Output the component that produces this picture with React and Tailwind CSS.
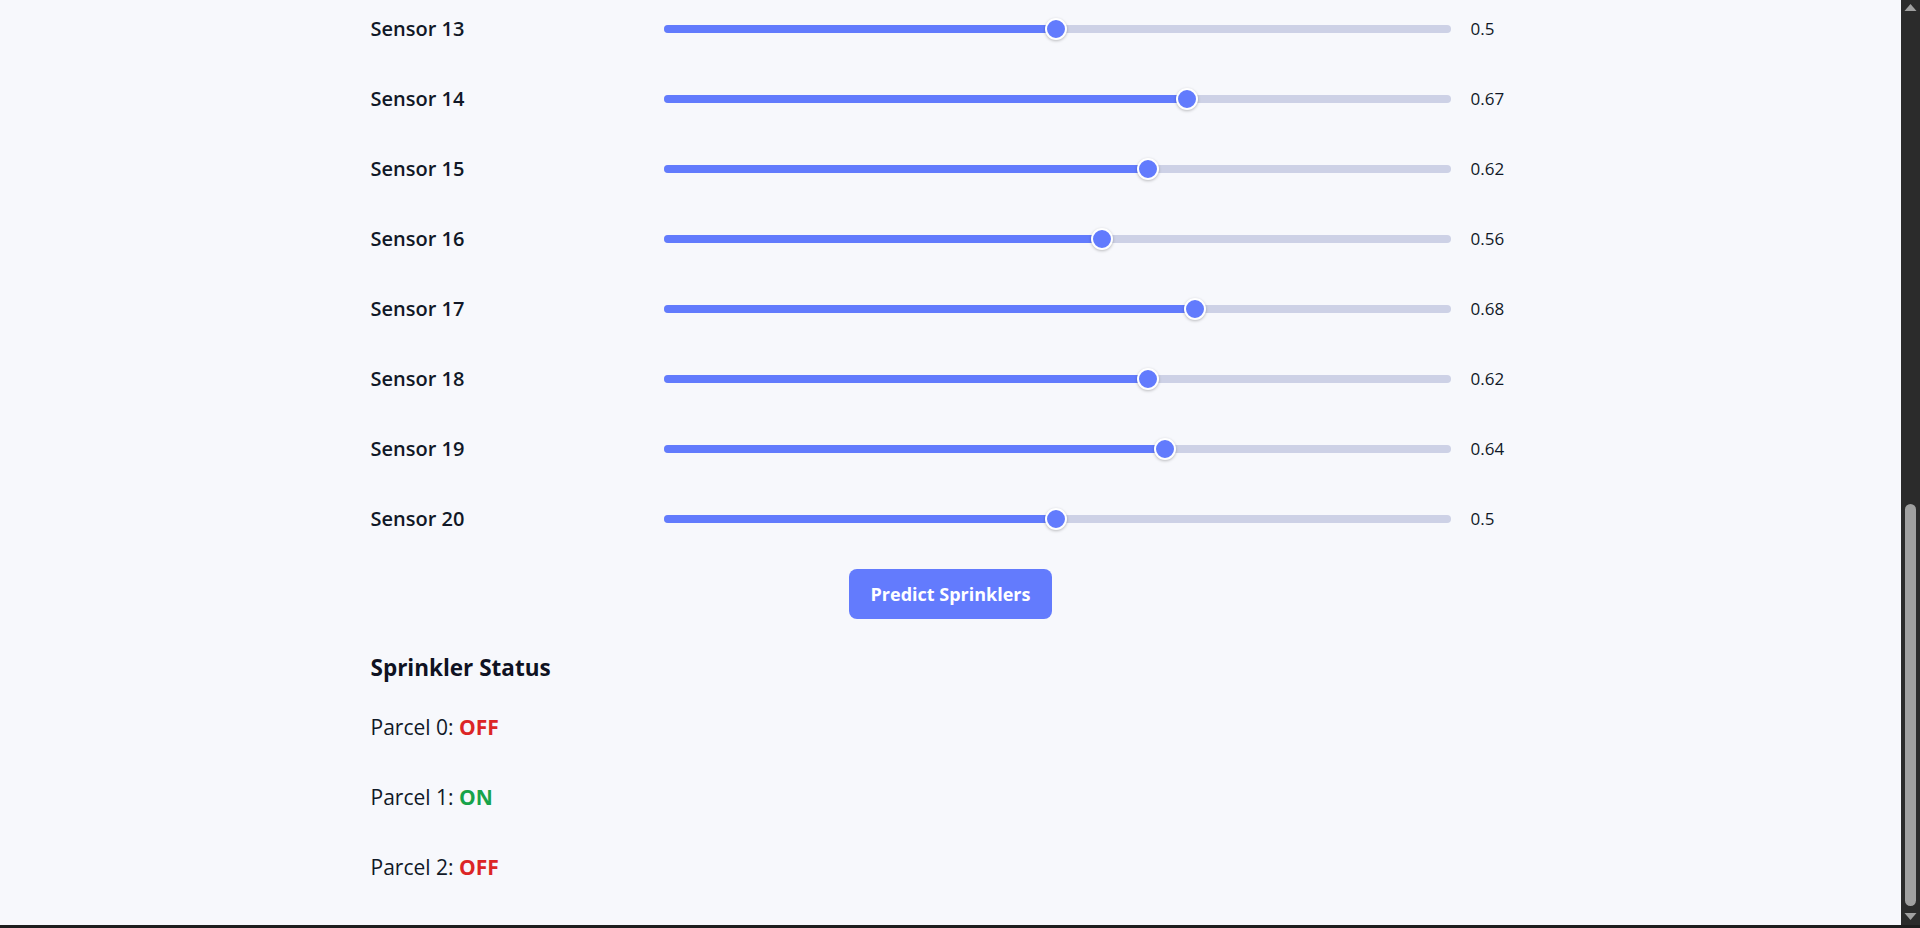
import React from "react";

const sensors = [
  { name: "Sensor 13", value: "0.5", pct: 49.9 },
  { name: "Sensor 14", value: "0.67", pct: 66.5 },
  { name: "Sensor 15", value: "0.62", pct: 61.6 },
  { name: "Sensor 16", value: "0.56", pct: 55.7 },
  { name: "Sensor 17", value: "0.68", pct: 67.5 },
  { name: "Sensor 18", value: "0.62", pct: 61.6 },
  { name: "Sensor 19", value: "0.64", pct: 63.7 },
  { name: "Sensor 20", value: "0.5", pct: 49.9 },
];

const parcels = [
  { name: "Parcel 0", on: false },
  { name: "Parcel 1", on: true },
  { name: "Parcel 2", on: false },
];

function Slider({ pct }) {
  return (
    <div className="relative h-[8px] flex-1 rounded-full bg-[#cdd1e6]">
      <div
        className="absolute left-0 top-0 h-full rounded-full bg-[#627bfd]"
        style={{ width: `${pct}%` }}
      />
      <div
        className="absolute top-1/2 h-[22px] w-[22px] -translate-x-1/2 -translate-y-1/2 rounded-full border-2 border-white bg-[#627bfd] shadow-[0_1px_3px_rgba(0,0,0,0.25)]"
        style={{ left: `${pct}%` }}
      />
    </div>
  );
}

export default function App() {
  return (
    <div
      className="flex h-[928px] w-full flex-col bg-[#1e1e1e] text-[#111827]"
      style={{ fontFamily: '"Open Sans", "Noto Sans", sans-serif' }}
    >
      <div className="flex h-[925px] w-full">
        <main className="flex-1 overflow-hidden bg-[#f7f8fc]">
          <div className="mx-auto -mt-[6px] w-[1160px]">
            {sensors.map((s) => (
              <div key={s.name} className="flex h-[70px] items-center">
                <div className="w-[293px] text-[20px] font-semibold leading-[26px]">
                  {s.name}
                </div>
                <Slider pct={s.pct} />
                <div className="ml-[20px] w-[60px] text-[17px] leading-[22px]">
                  {s.value}
                </div>
              </div>
            ))}
            <div className="mt-[15px] flex justify-center">
              <button className="h-[50px] w-[203px] rounded-[8px] bg-[#637bfd] text-[18px] font-bold text-white">
                Predict Sprinklers
              </button>
            </div>
            <h2 className="mt-[34px] text-[22.5px] font-bold leading-[30px] text-[#0f1222]">
              Sprinkler Status
            </h2>
            <div className="mt-[29px] flex flex-col gap-[40px]">
              {parcels.map((p) => (
                <p key={p.name} className="text-[21px] leading-[30px]">
                  {p.name}:{" "}
                  <span
                    className={
                      p.on
                        ? "font-bold text-[#17a34a]"
                        : "font-bold text-[#dc2626]"
                    }
                  >
                    {p.on ? "ON" : "OFF"}
                  </span>
                </p>
              ))}
            </div>
          </div>
        </main>
        <div className="flex w-[19px] flex-col items-center bg-[#2b2b2b]">
          <svg className="mt-[3px]" width="13" height="9" viewBox="0 0 13 9">
            <polygon points="6.5,1 12.5,8 0.5,8" fill="#a0a0a0" />
          </svg>
          <div className="flex-1" />
          <div className="h-[402px] w-[11px] rounded-full bg-[#a0a0a0]" />
          <svg className="mb-[4px] mt-[6px]" width="13" height="9" viewBox="0 0 13 9">
            <polygon points="0.5,1 12.5,1 6.5,8" fill="#a0a0a0" />
          </svg>
        </div>
      </div>
    </div>
  );
}
